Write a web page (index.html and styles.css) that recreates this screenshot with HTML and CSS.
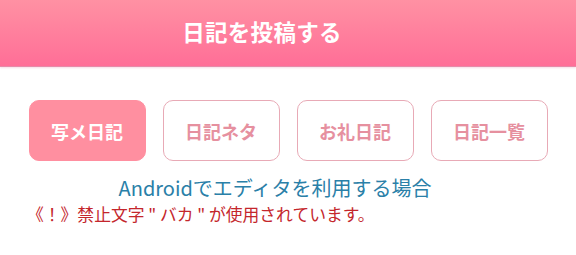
FILE: index.html
```html
<!DOCTYPE html>
<html>
  <head>
    <title>日記を投稿する</title>
    <link rel="stylesheet" href="styles.css">
  </head>
  <body>
    <div id="header">
      <h1>日記を投稿する</h1>
    </div>
    <div id="tabs">
      <button class="tab active">写メ日記</button>
      <button class="tab">日記ネタ</button>
      <button class="tab">お礼日記</button>
      <button class="tab">日記一覧</button>
    </div>
    <p class="android-link">Androidでエディタを利用する場合</p>
    <p class="warning">《！》禁止文字 " バカ " が使用されています。</p>
  </body>
</html>
```

FILE: styles.css
```css
/* page */
body {
  margin: 0;
  padding: 0;
  background-color: #ffffff;
  font-family: "Noto Sans CJK JP", "Noto Sans", sans-serif;
}
/* header bar */
#header {
  height: 66px;
  background: linear-gradient(to bottom, #ff91a3, #ff6e97);
  border-bottom: 1px solid #e68aa9;
  box-shadow: 0 1px 2px rgba(230, 138, 169, 0.3);
  display: flex;
  align-items: center;
  justify-content: center;
  padding-right: 52px;
}
#header h1 {
  margin: 0 0 4px 0;
  color: #ffffff;
  font-size: 22.5px;
  font-weight: bold;
  letter-spacing: 0.3px;
}
/* tab buttons */
#tabs {
  display: flex;
  justify-content: center;
  gap: 17px;
  padding-top: 33px;
}
.tab {
  width: 117px;
  height: 61px;
  border: 1.5px solid #e8aab6;
  border-radius: 10px;
  background-color: #ffffff;
  color: #e6909f;
  font-family: "Noto Sans CJK JP", sans-serif;
  font-size: 18px;
  font-weight: bold;
  padding: 0;
}
.tab.active {
  background-color: #ff8fa0;
  border-color: #ff8fa0;
  color: #ffffff;
}
/* texts */
.android-link {
  margin: 13px 0 0 0;
  padding-right: 26px;
  text-align: center;
  color: #2a80a8;
  font-size: 20px;
  line-height: 28px;
}
.warning {
  margin: 0;
  padding-left: 27px;
  color: #c4262c;
  font-size: 16.8px;
  line-height: 25px;
}
```
